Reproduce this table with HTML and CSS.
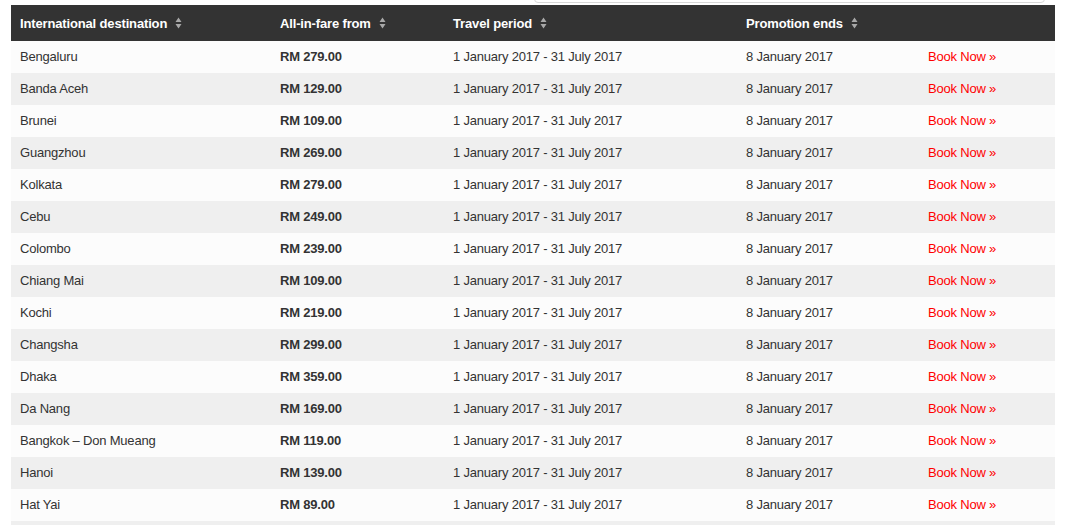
FILE: index.html
```html
<!DOCTYPE html>
<html>
<head>
<meta charset="utf-8">
<link rel="stylesheet" href="styles.css">
</head>
<body>
<div class="top-strip"><div class="top-box"></div></div>
<table class="fares">
  <colgroup>
    <col class="c1"><col class="c2"><col class="c3"><col class="c4"><col class="c5">
  </colgroup>
  <thead>
    <tr>
      <th><span class="sortable">International destination <span class="sort"><svg width="7" height="14" viewBox="0 0 7 14"><path d="M3.5 1.5 L6.5 6 L0.5 6 Z M3.5 12.5 L6.5 8 L0.5 8 Z" fill="#a8a8a8"/></svg></span></span></th>
      <th><span class="sortable">All-in-fare from <span class="sort"><svg width="7" height="14" viewBox="0 0 7 14"><path d="M3.5 1.5 L6.5 6 L0.5 6 Z M3.5 12.5 L6.5 8 L0.5 8 Z" fill="#a8a8a8"/></svg></span></span></th>
      <th><span class="sortable">Travel period <span class="sort"><svg width="7" height="14" viewBox="0 0 7 14"><path d="M3.5 1.5 L6.5 6 L0.5 6 Z M3.5 12.5 L6.5 8 L0.5 8 Z" fill="#a8a8a8"/></svg></span></span></th>
      <th><span class="sortable">Promotion ends <span class="sort"><svg width="7" height="14" viewBox="0 0 7 14"><path d="M3.5 1.5 L6.5 6 L0.5 6 Z M3.5 12.5 L6.5 8 L0.5 8 Z" fill="#a8a8a8"/></svg></span></span></th>
      <th></th>
    </tr>
  </thead>
  <tbody>
    <tr><td>Bengaluru</td><td class="price">RM 279.00</td><td>1 January 2017 - 31 July 2017</td><td>8 January 2017</td><td><a class="book" href="#">Book Now »</a></td></tr>
    <tr><td>Banda Aceh</td><td class="price">RM 129.00</td><td>1 January 2017 - 31 July 2017</td><td>8 January 2017</td><td><a class="book" href="#">Book Now »</a></td></tr>
    <tr><td>Brunei</td><td class="price">RM 109.00</td><td>1 January 2017 - 31 July 2017</td><td>8 January 2017</td><td><a class="book" href="#">Book Now »</a></td></tr>
    <tr><td>Guangzhou</td><td class="price">RM 269.00</td><td>1 January 2017 - 31 July 2017</td><td>8 January 2017</td><td><a class="book" href="#">Book Now »</a></td></tr>
    <tr><td>Kolkata</td><td class="price">RM 279.00</td><td>1 January 2017 - 31 July 2017</td><td>8 January 2017</td><td><a class="book" href="#">Book Now »</a></td></tr>
    <tr><td>Cebu</td><td class="price">RM 249.00</td><td>1 January 2017 - 31 July 2017</td><td>8 January 2017</td><td><a class="book" href="#">Book Now »</a></td></tr>
    <tr><td>Colombo</td><td class="price">RM 239.00</td><td>1 January 2017 - 31 July 2017</td><td>8 January 2017</td><td><a class="book" href="#">Book Now »</a></td></tr>
    <tr><td>Chiang Mai</td><td class="price">RM 109.00</td><td>1 January 2017 - 31 July 2017</td><td>8 January 2017</td><td><a class="book" href="#">Book Now »</a></td></tr>
    <tr><td>Kochi</td><td class="price">RM 219.00</td><td>1 January 2017 - 31 July 2017</td><td>8 January 2017</td><td><a class="book" href="#">Book Now »</a></td></tr>
    <tr><td>Changsha</td><td class="price">RM 299.00</td><td>1 January 2017 - 31 July 2017</td><td>8 January 2017</td><td><a class="book" href="#">Book Now »</a></td></tr>
    <tr><td>Dhaka</td><td class="price">RM 359.00</td><td>1 January 2017 - 31 July 2017</td><td>8 January 2017</td><td><a class="book" href="#">Book Now »</a></td></tr>
    <tr><td>Da Nang</td><td class="price">RM 169.00</td><td>1 January 2017 - 31 July 2017</td><td>8 January 2017</td><td><a class="book" href="#">Book Now »</a></td></tr>
    <tr><td>Bangkok – Don Mueang</td><td class="price">RM 119.00</td><td>1 January 2017 - 31 July 2017</td><td>8 January 2017</td><td><a class="book" href="#">Book Now »</a></td></tr>
    <tr><td>Hanoi</td><td class="price">RM 139.00</td><td>1 January 2017 - 31 July 2017</td><td>8 January 2017</td><td><a class="book" href="#">Book Now »</a></td></tr>
    <tr><td>Hat Yai</td><td class="price">RM 89.00</td><td>1 January 2017 - 31 July 2017</td><td>8 January 2017</td><td><a class="book" href="#">Book Now »</a></td></tr>
    <tr class="filler"><td></td><td></td><td></td><td></td><td></td></tr>
  </tbody>
</table>
</body>
</html>
```

FILE: styles.css
```css
html, body {
  margin: 0;
  padding: 0;
  background: #ffffff;
  font-family: "Liberation Sans", Arial, Helvetica, sans-serif;
  color: #333333;
}
body {
  padding: 0 20px 0 11px;
  overflow: hidden;
  height: 525px;
}
.top-strip {
  height: 5px;
  position: relative;
}
.top-box {
  position: absolute;
  left: 523px;
  width: 511px;
  top: -10px;
  height: 13px;
  border: 1px solid #d8d8d8;
  border-radius: 0 0 4px 4px;
  box-sizing: border-box;
}
.fares {
  width: 1044px;
  border-collapse: collapse;
  table-layout: fixed;
  font-size: 13px;
}
.c1 { width: 260px; }
.c2 { width: 173px; }
.c3 { width: 293px; }
.c4 { width: 182px; }
.c5 { width: 136px; }
.fares th {
  background: #333333;
  color: #ffffff;
  font-weight: bold;
  text-align: left;
  height: 36px;
  padding: 0 0 0 9px;
  vertical-align: middle;
  letter-spacing: -0.15px;
}
.sortable {
  display: inline-flex;
  align-items: center;
}
.sort {
  display: inline-flex;
  margin-left: 8px;
}
.fares td {
  height: 32px;
  padding: 0 0 1px 9px;
  box-sizing: border-box;
  vertical-align: middle;
  white-space: nowrap;
  letter-spacing: -0.2px;
}
.fares tbody tr:nth-child(odd) td { background: #fcfcfc; }
.fares tbody tr:nth-child(even) td { background: #efefef; }
.fares tbody tr.filler td { background: #efefef; }
.price { font-weight: bold; }
.book {
  color: #ff0000;
  text-decoration: none;
}
```
